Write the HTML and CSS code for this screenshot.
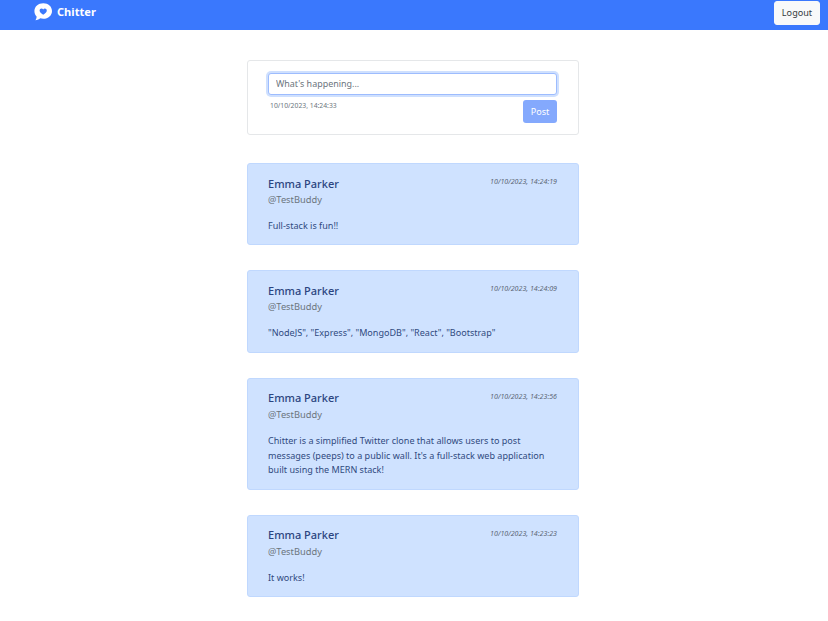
FILE: index.html
```html
<!DOCTYPE html>
<html lang="en">
<head>
<meta charset="utf-8">
<title>Chitter</title>
<link rel="stylesheet" href="styles.css">
</head>
<body>
<header class="navbar">
  <a class="brand" href="#">
    <svg class="brand-icon" viewBox="0 0 20 20" width="20" height="20" aria-hidden="true">
      <path fill="#fff" fill-rule="evenodd" d="M10.300 1.200c5 0 8.700 3.300 8.700 7.800s-3.700 7.800-8.700 7.800c-1.100 0-2.100-.2-3.100-.5-1 .9-2.700 1.800-4.800 2 .7-.9 1.200-2.100 1.200-3.700C2.400 13.200 1.400 11.300 1.400 9c0-4.500 3.900-7.800 8.900-7.800zM10.200 12.800c2-1.400 3.600-2.600 3.600-4.300 0-1.200-.9-2-1.900-2-.7 0-1.300.4-1.700 1-.4-.6-1-1-1.700-1-1 0-1.900.8-1.900 2 0 1.700 1.600 2.900 3.600 4.300z"/>
    </svg>
    <span class="brand-name">Chitter</span>
  </a>
  <button class="logout" type="button">Logout</button>
</header>
<main class="wall">
  <section class="composer">
    <input class="composer-input" type="text" placeholder="What's happening...">
    <div class="composer-foot">
      <span class="composer-time">10/10/2023, 14:24:33</span>
      <button class="post" type="button">Post</button>
    </div>
  </section>
  <article class="peep">
    <div class="peep-head"><h2 class="peep-name">Emma Parker</h2><time class="peep-time">10/10/2023, 14:24:19</time></div>
    <p class="peep-handle">@TestBuddy</p>
    <p class="peep-text">Full-stack is fun!!</p>
  </article>
  <article class="peep">
    <div class="peep-head"><h2 class="peep-name">Emma Parker</h2><time class="peep-time">10/10/2023, 14:24:09</time></div>
    <p class="peep-handle">@TestBuddy</p>
    <p class="peep-text">"NodeJS", "Express", "MongoDB", "React", "Bootstrap"</p>
  </article>
  <article class="peep">
    <div class="peep-head"><h2 class="peep-name">Emma Parker</h2><time class="peep-time">10/10/2023, 14:23:56</time></div>
    <p class="peep-handle">@TestBuddy</p>
    <p class="peep-text">Chitter is a simplified Twitter clone that allows users to post messages (peeps) to a public wall. It's a full-stack web application built using the MERN stack!</p>
  </article>
  <article class="peep">
    <div class="peep-head"><h2 class="peep-name">Emma Parker</h2><time class="peep-time">10/10/2023, 14:23:23</time></div>
    <p class="peep-handle">@TestBuddy</p>
    <p class="peep-text">It works!</p>
  </article>
</main>
</body>
</html>
```
FILE: styles.css
```css
* { box-sizing: border-box; }
html, body { margin: 0; padding: 0; }
body {
  background: #fff;
  color: #212529;
  font-family: "Noto Sans", "Open Sans", sans-serif;
  font-size: 9px;
  overflow: hidden;
}
.navbar {
  height: 30px;
  background: #3a78fd;
  display: flex;
  align-items: flex-start;
  justify-content: space-between;
  padding: 0 8px 0 33px;
}
.brand {
  display: flex;
  align-items: center;
  gap: 4px;
  height: 23px;
  color: #fff;
  text-decoration: none;
}
.brand-name { font-size: 11.100px; font-weight: 700; line-height: 22px; }
.logout {
  margin-top: 1px;
  width: 46px;
  height: 23.500px;
  padding: 0;
  border: 1px solid #f8f9fa;
  border-radius: 3px;
  background: #f8f9fa;
  color: #343a40;
  font: 9.100px "Noto Sans", sans-serif;
}
.wall {
  width: 332px;
  margin: 30px 0 0 247px;
  display: flex;
  flex-direction: column;
}
.composer {
  height: 75px;
  margin-bottom: 28px;
  padding: 12px 21px 0 20px;
  border: 1px solid #e5e7e9;
  border-radius: 3px;
  background: #fff;
}
.composer-input {
  display: block;
  width: 100%;
  height: 21.500px;
  padding: 0 7px;
  border: 1px solid #9dbcfe;
  border-radius: 3px;
  outline: 0;
  box-shadow: 0 0 0 2px #cfe0fe;
  font: 8.950px "Noto Sans", sans-serif;
  color: #212529;
}
.composer-input::placeholder { color: #6c757d; opacity: 1; }
.composer-foot {
  display: flex;
  justify-content: space-between;
  align-items: flex-start;
  margin-top: 5.500px;
}
.composer-time {
  margin-left: 2px;
  font-size: 6.800px;
  line-height: 11px;
  color: #6c757d;
}
.post {
  width: 34px;
  height: 22.500px;
  padding: 0;
  border: 0;
  border-radius: 3px;
  background: #84a9fd;
  color: #fff;
  font: 9px "Noto Sans", sans-serif;
}
.peep {
  margin-bottom: 25px;
  padding: 11.500px 21px 10.900px 20px;
  border: 1px solid #c0d8fe;
  border-radius: 3px;
  background: #cfe2ff;
  color: #2f4a80;
}
.peep-head {
  display: flex;
  justify-content: space-between;
  align-items: flex-start;
}
.peep-name {
  margin: 0;
  font-size: 11px;
  font-weight: 500;
  line-height: 15px;
  color: #2b4580;
}
.peep-time {
  margin-top: .5px;
  font-size: 7.080px;
  font-style: italic;
  line-height: 10px;
  color: #5c6675;
}
.peep-handle {
  margin: 1.500px 0 0;
  font-size: 9.300px;
  line-height: 15px;
  color: #6c757d;
}
.peep-text {
  margin: 12px 0 0;
  font-size: 9.050px;
  line-height: 14.600px;
}
```
